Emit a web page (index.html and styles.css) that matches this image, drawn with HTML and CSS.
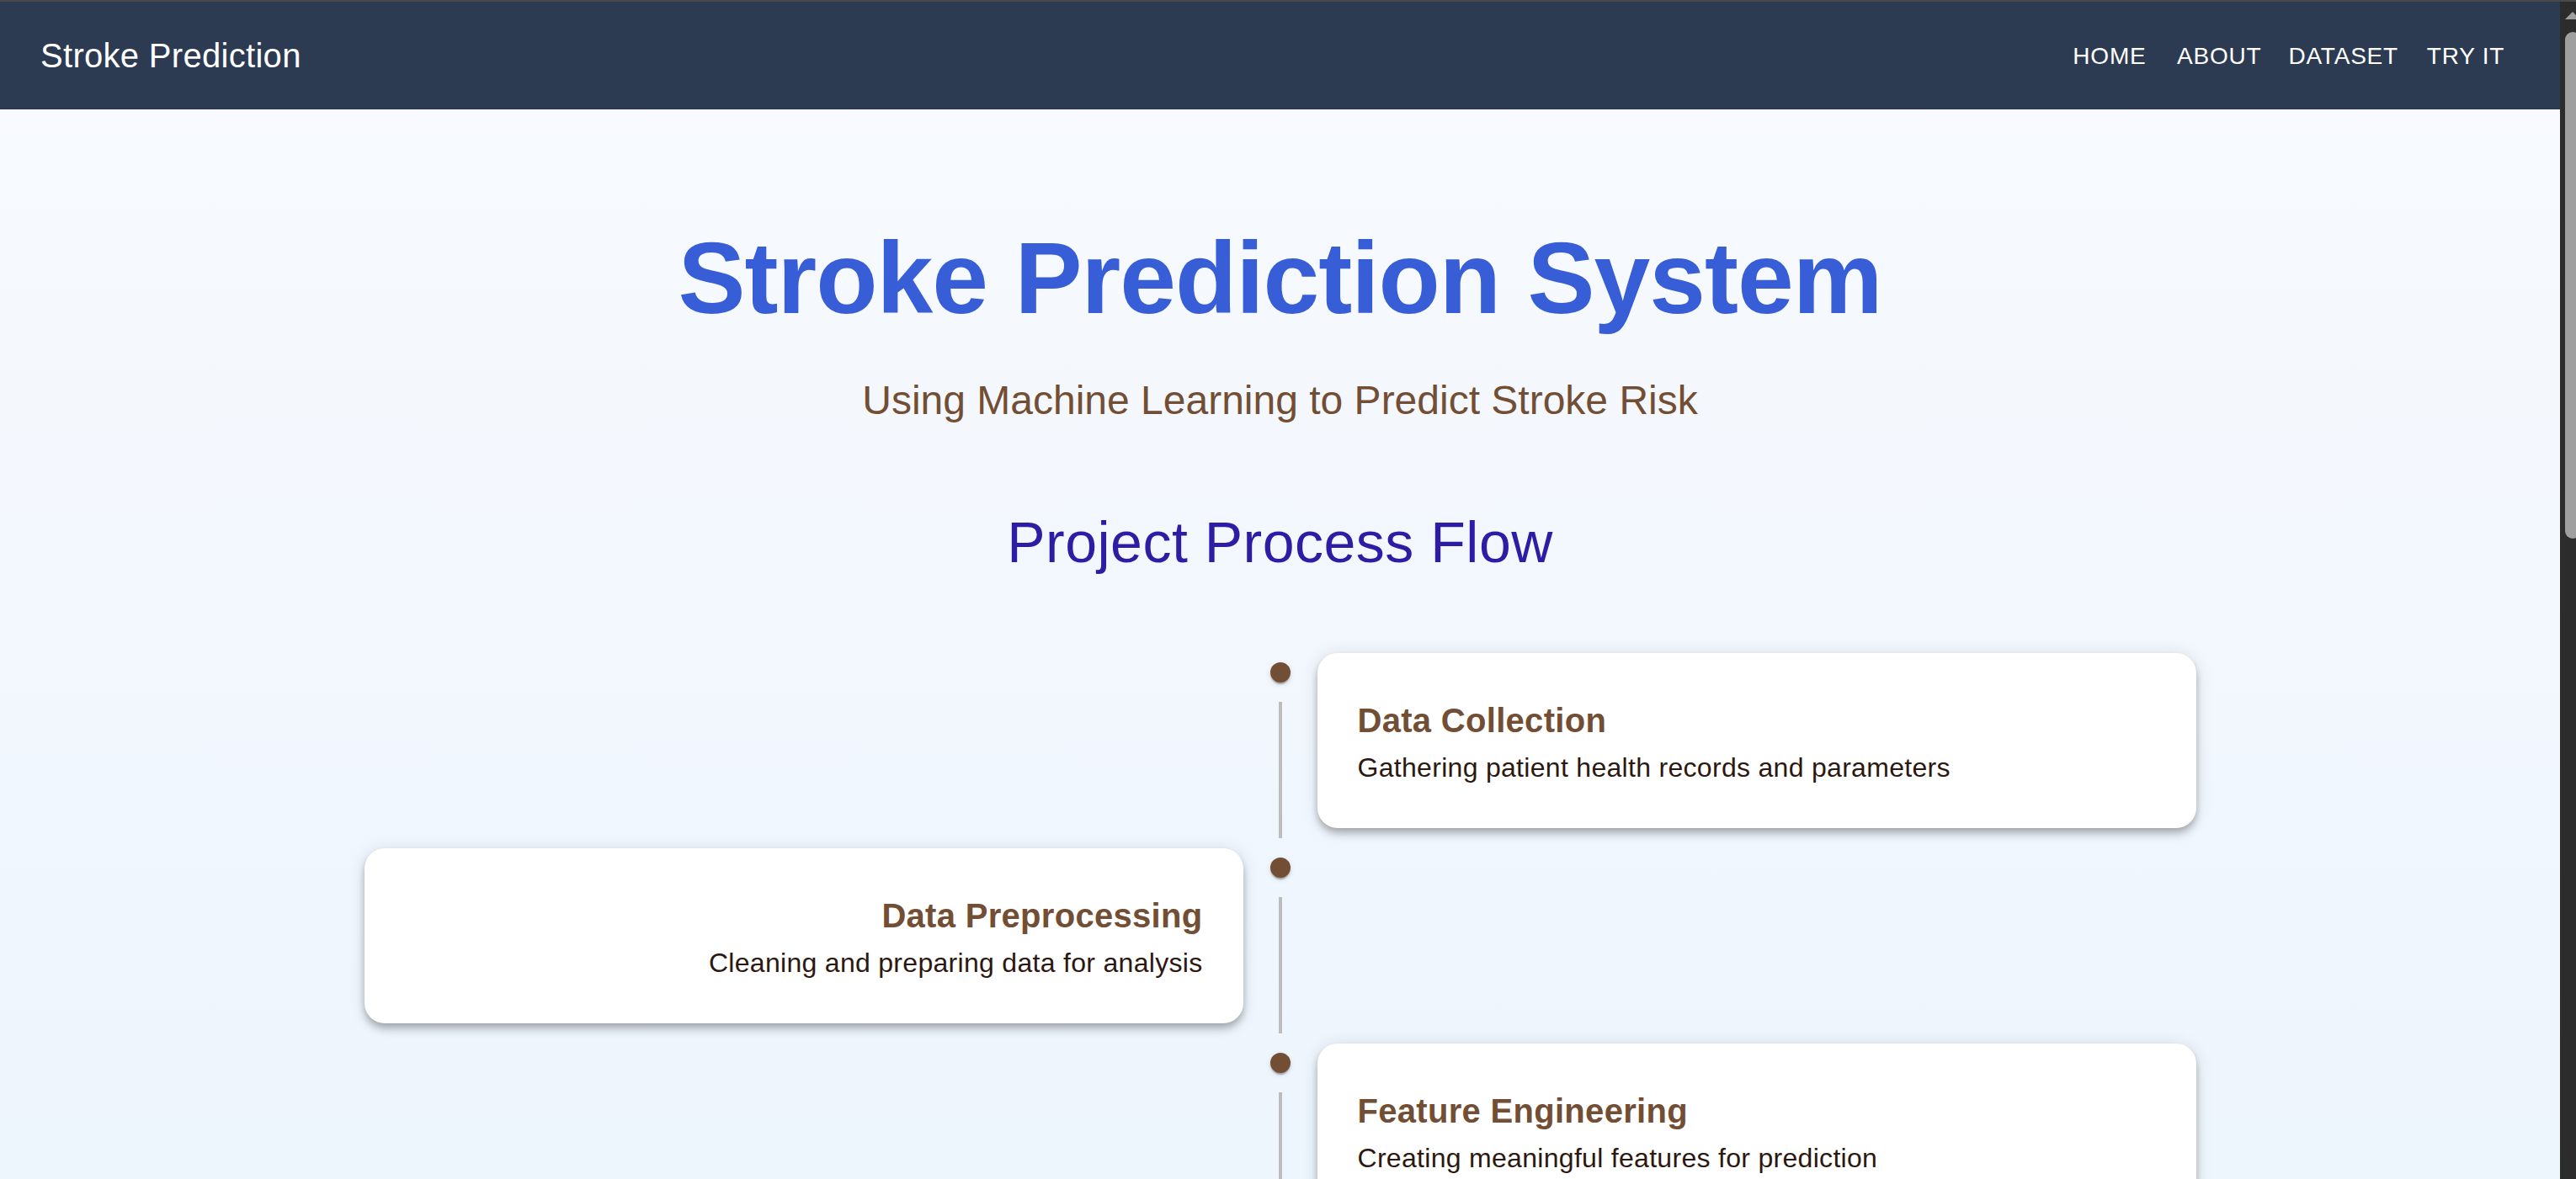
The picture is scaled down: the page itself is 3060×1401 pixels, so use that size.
FILE: index.html
```html
<!DOCTYPE html>
<html lang="en">
<head>
  <meta charset="utf-8">
  <title>Stroke Prediction</title>
  <link rel="stylesheet" href="styles.css">
</head>
<body>
  <div class="page">
    <header class="app-bar">
      <div class="brand">Stroke Prediction</div>
      <nav class="nav">
        <a class="nav-link" href="#home">HOME</a>
        <a class="nav-link" href="#about">ABOUT</a>
        <a class="nav-link" href="#dataset">DATASET</a>
        <a class="nav-link" href="#try">TRY IT</a>
      </nav>
    </header>
    <main class="container">
      <h1 class="title">Stroke Prediction System</h1>
      <p class="subtitle">Using Machine Learning to Predict Stroke Risk</p>
      <h2 class="section-title">Project Process Flow</h2>
      <ol class="timeline">
        <li class="item">
          <div class="separator"><span class="dot"></span><span class="connector"></span></div>
          <article class="card">
            <h3 class="card-title">Data Collection</h3>
            <p class="card-text">Gathering patient health records and parameters</p>
          </article>
        </li>
        <li class="item item-left">
          <div class="separator"><span class="dot"></span><span class="connector"></span></div>
          <article class="card">
            <h3 class="card-title">Data Preprocessing</h3>
            <p class="card-text">Cleaning and preparing data for analysis</p>
          </article>
        </li>
        <li class="item">
          <div class="separator"><span class="dot"></span><span class="connector"></span></div>
          <article class="card">
            <h3 class="card-title">Feature Engineering</h3>
            <p class="card-text">Creating meaningful features for prediction</p>
          </article>
        </li>
      </ol>
    </main>
  </div>
  <div class="scrollbar" aria-hidden="true">
    <svg class="scroll-arrow" viewBox="0 0 18 9"><path d="M0 9L9 0L18 9Z" fill="#9f9f9f"/></svg>
    <span class="scroll-thumb"></span>
  </div>
</body>
</html>
```
FILE: styles.css
```css
* {
  box-sizing: border-box;
  margin: 0;
  padding: 0;
}

body {
  display: flex;
  height: 100vh;
  overflow: hidden;
  border-top: 2px solid #484a48;
  font-family: "Liberation Sans", Arial, sans-serif;
  color: #2c1810;
}

.page {
  flex: 1;
  min-width: 0;
  overflow: hidden;
  background: linear-gradient(180deg, #f8fafe, #edf5fd);
}

.app-bar {
  display: flex;
  align-items: center;
  justify-content: space-between;
  height: 128px;
  padding: 0 48px;
  background: #2d3b52;
  color: #fff;
}

.brand {
  font-size: 40px;
  line-height: 64px;
  letter-spacing: 0.0075em;
}

.nav {
  display: flex;
}

.nav-link {
  min-width: 128px;
  padding: 12px 16px;
  font-size: 28px;
  line-height: 49px;
  letter-spacing: 0.02857em;
  text-align: center;
  text-decoration: none;
  color: inherit;
}

.container {
  max-width: 2400px;
  margin: 0 auto;
  padding: 128px 48px;
}

.title {
  margin-bottom: 42px;
  font-size: 120px;
  line-height: 144px;
  letter-spacing: -0.00833em;
  text-align: center;
  color: #375dd7;
}

.subtitle {
  margin-bottom: 94px;
  font-size: 48px;
  line-height: 64px;
  text-align: center;
  color: #724e34;
}

.section-title {
  margin-bottom: 66px;
  font-size: 68px;
  font-weight: 400;
  line-height: 84px;
  letter-spacing: 0.00735em;
  text-align: center;
  color: #2f1ca4;
}

.timeline {
  padding: 12px 32px;
  list-style: none;
}

.item {
  display: grid;
  grid-template-columns: 1fr 24px 1fr;
}

.separator {
  grid-column: 2;
  grid-row: 1;
  display: flex;
  flex-direction: column;
  align-items: center;
}

.dot {
  width: 24px;
  height: 24px;
  margin: 23px 0;
  border-radius: 50%;
  background: #724e34;
  box-shadow: 0 4px 2px -2px rgba(0, 0, 0, 0.2), 0 2px 2px rgba(0, 0, 0, 0.14), 0 2px 6px rgba(0, 0, 0, 0.12);
}

.connector {
  flex: 1;
  width: 4px;
  background: #bdbdbd;
}

.card {
  grid-column: 3;
  grid-row: 1;
  margin: 12px 32px;
  padding: 48px;
  border-radius: 24px;
  background: #fff;
  box-shadow: 0 4px 8px -2px rgba(0, 0, 0, 0.2), 0 8px 10px rgba(0, 0, 0, 0.14), 0 2px 20px rgba(0, 0, 0, 0.12);
}

.item-left .card {
  grid-column: 1;
  text-align: right;
}

.card-title {
  font-size: 40px;
  line-height: 64px;
  letter-spacing: 0.0075em;
  color: #724e34;
}

.card-text {
  font-size: 32px;
  line-height: 48px;
  letter-spacing: 0.00938em;
}

.scrollbar {
  flex: none;
  width: 19px;
  padding: 12px 0 0 6px;
  overflow: hidden;
  background: #2c2c2c;
}

.scroll-arrow {
  display: block;
  width: 18px;
  height: 9px;
}

.scroll-thumb {
  display: block;
  width: 18px;
  height: 43vh;
  margin-top: 15px;
  border-radius: 9px;
  background: #9f9f9f;
}
```
